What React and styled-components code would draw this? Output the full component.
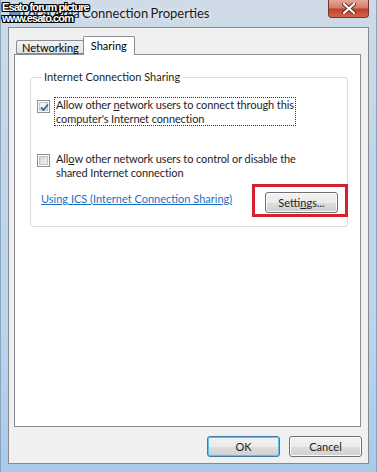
import styled, { createGlobalStyle } from "styled-components";

const Global = createGlobalStyle`
    html, body {
        margin: 0;
        padding: 0;
        background: #fff;
    }
    body {
        font-family: Lato, "Noto Sans", sans-serif;
        font-size: 11px;
        color: #000;
    }
`;

const Window = styled.div`
    position: relative;
    width: 377px;
    height: 472px;
    box-sizing: border-box;
    padding: 0 7px 8px 7px;
    display: flex;
    flex-direction: column;
    background: linear-gradient(to bottom, #cfdbe6 0%, #c3d6e8 30%, #bcd4ec 70%, #a8cbe9 100%);
    border-left: 1px solid #8aa6bf;
    border-right: 1px solid #8aa6bf;
    overflow: hidden;
`;

const TitleBar = styled.div`
    height: 27px;
    display: flex;
    align-items: flex-start;
    gap: 0;
`;

const TitleIcon = styled.div`
    margin-top: 7px;
    width: 14px;
    height: 14px;
`;

const TitleText = styled.div`
    margin-top: 5px;
    font-family: Lato, "Noto Sans", sans-serif;
    font-size: 13px;
    word-spacing: -1px;
    color: #1a1a1a;
    text-shadow: 0 0 6px rgba(255, 255, 255, 0.9);
    flex: 1;
    white-space: nowrap;
`;

const CloseButton = styled.div`
    width: 41px;
    height: 18px;
    display: grid;
    place-items: center;
    border: 1px solid #6d3a2e;
    border-top: none;
    border-radius: 0 0 4px 4px;
    background: linear-gradient(to bottom, #e6a699 0%, #d47c69 45%, #c2402a 55%, #d0664b 100%);
    box-sizing: border-box;
`;

const Client = styled.div`
    flex: 1;
    display: flex;
    flex-direction: column;
    background: #f0f0f0;
    border: 1px solid #858a90;
    padding: 8px 7px 6px 5px;
`;

const TabStrip = styled.div`
    height: 18px;
    display: flex;
    align-items: flex-end;
    padding-left: 2px;
`;

const Tab = styled.div`
    box-sizing: border-box;
    height: ${(p) => (p.$active ? "19px" : "14px")};
    margin-bottom: ${(p) => (p.$active ? "-1px" : "0")};
    padding: ${(p) => (p.$active ? "2px 7px 0 7px" : "0 4px 0 5px")};
    border: 1px solid #898c95;
    border-bottom: ${(p) => (p.$active ? "none" : "1px solid #898c95")};
    margin-left: ${(p) => (p.$active ? "-1px" : "0")};
    border-radius: 2px 2px 0 0;
    background: ${(p) =>
        p.$active ? "#fff" : "linear-gradient(to bottom, #f2f2f2, #e3e3e3)"};
    font-size: 11px;
    line-height: 13px;
    white-space: nowrap;
    position: relative;
    z-index: ${(p) => (p.$active ? 2 : 1)};
`;

const TabPanel = styled.div`
    height: 373px;
    box-sizing: border-box;
    background: #fff;
    border: 1px solid #898c95;
    padding: 15px 12px 0 15px;
`;

const GroupBox = styled.fieldset`
    margin: 0;
    padding: 0 10px 10px 6px;
    border: 1px solid #d5dfe5;
    border-radius: 3px;
    height: 157px;
    box-sizing: border-box;
`;

const Legend = styled.legend`
    margin-left: 5px;
    padding: 0 2px;
    font-size: 11px;
    line-height: 14px;
    color: #1e1e1e;
`;

const CheckRow = styled.div`
    display: flex;
    align-items: flex-start;
    gap: 4px;
    margin-top: ${(p) => p.$top}px;
`;

const Box = styled.div`
    flex: none;
    width: 13px;
    height: 13px;
    box-sizing: border-box;
    margin-top: 3px;
    border: 1px solid #8e8f8f;
    background: #fff;
    display: grid;
    place-items: center;
    & > div {
        width: 9px;
        height: 9px;
        box-sizing: border-box;
        border: 1px solid #c4c4c4;
        background: ${(p) =>
            p.$checked
                ? "linear-gradient(135deg, #f4f6f8, #dfe4ea)"
                : "linear-gradient(135deg, #d6d6d6, #f2f2f2)"};
        display: grid;
        place-items: center;
    }
`;

const CheckLabel = styled.div`
    font-size: 11px;
    line-height: 13.5px;
    letter-spacing: -0.1px;
    padding: 0 1px;
    color: #1e1e1e;
    white-space: nowrap;
    border: 1px dotted ${(p) => (p.$focus ? "#333" : "transparent")};
`;

const LinkRow = styled.div`
    margin-top: 4px;
    display: flex;
    align-items: flex-start;
    justify-content: space-between;
    padding-left: 4px;
`;

const Link = styled.a`
    color: #1c6fc4;
    text-decoration: underline;
    font-size: 11px;
    line-height: 13px;
    white-space: nowrap;
    margin-top: 8px;
`;

const Highlight = styled.div`
    margin-right: -11px;
    padding: 5px 7px 1px 10px;
    border: 3px solid #d6222f;
`;

const Button = styled.div`
    box-sizing: border-box;
    width: ${(p) => p.$w || 73}px;
    height: 21px;
    display: grid;
    place-items: center;
    font-size: 11px;
    border-radius: 3px;
    border: 1px solid ${(p) => (p.$default ? "#3d7bad" : "#707070")};
    background: linear-gradient(to bottom, #f2f2f2 0%, #ebebeb 50%, #dddddd 51%, #cfcfcf 100%);
    box-shadow: inset 0 0 0 1px ${(p) => (p.$default ? "#58c3f0" : "#fcfcfc")};
    color: #1e1e1e;
`;

const ButtonRow = styled.div`
    margin-top: 9px;
    margin-right: -1px;
    display: flex;
    justify-content: flex-end;
    gap: 9px;
`;

const Watermark = styled.div`
    position: absolute;
    left: 1px;
    top: 2px;
    font-family: "Liberation Sans", sans-serif;
    font-size: 11px;
    line-height: 11px;
    font-weight: bold;
    letter-spacing: -0.9px;
    color: #fff;
    text-shadow: 1px 0 0 #000, -1px 0 0 #000, 0 1px 0 #000, 0 -1px 0 #000,
        1px 1px 0 #000, -1px -1px 0 #000, 1px -1px 0 #000, -1px 1px 0 #000;
`;

const CheckMark = () => (
    <svg width="9" height="9" viewBox="0 0 9 9">
        <path d="M1 4.5 L3.5 7 L8 1.5" fill="none" stroke="#3e5ea8" strokeWidth="1.8" />
    </svg>
);

const CloseX = () => (
    <svg width="14" height="11" viewBox="0 0 14 11">
        <path d="M2 1 L12 10 M12 1 L2 10" stroke="#5a2a20" strokeWidth="4" strokeLinecap="round" />
        <path d="M2 1 L12 10 M12 1 L2 10" stroke="#fff" strokeWidth="2.2" strokeLinecap="round" />
    </svg>
);

const NetIcon = () => (
    <svg width="14" height="14" viewBox="0 0 14 14">
        <rect x="2" y="1" width="10" height="8" fill="#6e8fb5" stroke="#2d4a6d" />
        <rect x="4" y="10" width="6" height="2" fill="#6b6b6b" />
    </svg>
);

function CheckBox({ checked, focus, top, children }) {
    return (
        <CheckRow $top={top}>
            <Box $checked={checked}>
                <div>{checked && <CheckMark />}</div>
            </Box>
            <CheckLabel $focus={focus}>{children}</CheckLabel>
        </CheckRow>
    );
}

export default function App() {
    return (
        <>
            <Global />
            <Window>
                <TitleBar>
                    <TitleIcon>
                        <NetIcon />
                    </TitleIcon>
                    <TitleText>Local Area Connection Properties</TitleText>
                    <CloseButton>
                        <CloseX />
                    </CloseButton>
                </TitleBar>
                <Client>
                    <TabStrip>
                        <Tab>Networking</Tab>
                        <Tab $active>Sharing</Tab>
                    </TabStrip>
                    <TabPanel>
                        <GroupBox>
                            <Legend>Internet Connection Sharing</Legend>
                            <CheckBox checked focus top={13}>
                                Allow other <u>n</u>etwork users to connect through this
                                <br />
                                computer's Internet connection
                            </CheckBox>
                            <CheckBox top={25}>
                                All<u>o</u>w other network users to control or disable the
                                <br />
                                shared Internet connection
                            </CheckBox>
                            <LinkRow>
                                <Link>Using ICS (Internet Connection Sharing)</Link>
                                <Highlight>
                                    <Button $w={73}>
                                        <span>
                                            Setti<u>n</u>gs...
                                        </span>
                                    </Button>
                                </Highlight>
                            </LinkRow>
                        </GroupBox>
                    </TabPanel>
                    <ButtonRow>
                        <Button $default>OK</Button>
                        <Button>Cancel</Button>
                    </ButtonRow>
                </Client>
                <Watermark>
                    Esato forum picture
                    <br />
                    www.esato.com
                </Watermark>
            </Window>
        </>
    );
}
